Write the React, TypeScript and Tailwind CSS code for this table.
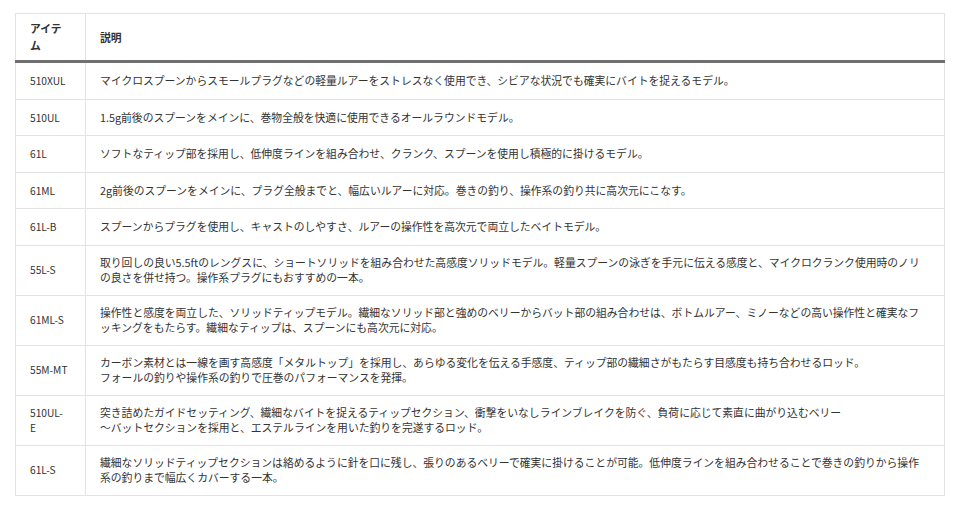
const rows: { item: string[]; lines: string[] }[] = [
  { item: ['510XUL'], lines: ['マイクロスプーンからスモールプラグなどの軽量ルアーをストレスなく使用でき、シビアな状況でも確実にバイトを捉えるモデル。'] },
  { item: ['510UL'], lines: ['1.5g前後のスプーンをメインに、巻物全般を快適に使用できるオールラウンドモデル。'] },
  { item: ['61L'], lines: ['ソフトなティップ部を採用し、低伸度ラインを組み合わせ、クランク、スプーンを使用し積極的に掛けるモデル。'] },
  { item: ['61ML'], lines: ['2g前後のスプーンをメインに、プラグ全般までと、幅広いルアーに対応。巻きの釣り、操作系の釣り共に高次元にこなす。'] },
  { item: ['61L-B'], lines: ['スプーンからプラグを使用し、キャストのしやすさ、ルアーの操作性を高次元で両立したベイトモデル。'] },
  {
    item: ['55L-S'],
    lines: [
      '取り回しの良い5.5ftのレングスに、ショートソリッドを組み合わせた高感度ソリッドモデル。軽量スプーンの泳ぎを手元に伝える感度と、マイクロクランク使用時のノリ',
      'の良さを併せ持つ。操作系プラグにもおすすめの一本。',
    ],
  },
  {
    item: ['61ML-S'],
    lines: [
      '操作性と感度を両立した、ソリッドティップモデル。繊細なソリッド部と強めのベリーからバット部の組み合わせは、ボトムルアー、ミノーなどの高い操作性と確実なフ',
      'ッキングをもたらす。繊細なティップは、スプーンにも高次元に対応。',
    ],
  },
  {
    item: ['55M-MT'],
    lines: [
      'カーボン素材とは一線を画す高感度「メタルトップ」を採用し、あらゆる変化を伝える手感度、ティップ部の繊細さがもたらす目感度も持ち合わせるロッド。',
      'フォールの釣りや操作系の釣りで圧巻のパフォーマンスを発揮。',
    ],
  },
  {
    item: ['510UL-', 'E'],
    lines: [
      '突き詰めたガイドセッティング、繊細なバイトを捉えるティップセクション、衝撃をいなしラインブレイクを防ぐ、負荷に応じて素直に曲がり込むベリー',
      '～バットセクションを採用と、エステルラインを用いた釣りを完遂するロッド。',
    ],
  },
  {
    item: ['61L-S'],
    lines: [
      '繊細なソリッドティップセクションは絡めるように針を口に残し、張りのあるベリーで確実に掛けることが可能。低伸度ラインを組み合わせることで巻きの釣りから操作',
      '系の釣りまで幅広くカバーする一本。',
    ],
  },
]

export default function App() {
  return (
    <div
      className="bg-white w-[969px] h-[506px] pt-[13px] pl-[15px] text-[#333] text-[10.8px]"
      style={{ fontFamily: '"Noto Sans CJK JP", "Noto Sans", sans-serif' }}
    >
      <table className="w-[930px] border-collapse border border-[#e3e3e3] table-fixed">
        <colgroup>
          <col className="w-[70px]" />
          <col />
        </colgroup>
        <thead>
          <tr className="border-b-[3px] border-[#707070]">
            <th className="text-left font-bold align-middle pl-[14px] pr-2 py-[6px] leading-[17px] border-r border-[#e3e3e3]">
              アイテ<br />ム
            </th>
            <th className="text-left font-bold align-middle px-[14px] py-[6px] leading-[17px]">説明</th>
          </tr>
        </thead>
        <tbody>
          {rows.map(r => {
            const two = r.lines.length > 1
            return (
              <tr key={r.item.join('')} className="border-b border-[#e3e3e3]">
                <td
                  className={
                    'align-middle pl-[14px] pr-2 border-r border-[#e3e3e3] text-[10.2px] ' +
                    (two ? 'py-[9px] leading-[15.5px]' : 'py-[10px] leading-[15.5px]')
                  }
                >
                  {r.item.map((t, i) => (
                    <div key={i}>{t}</div>
                  ))}
                </td>
                <td
                  className={
                    'align-middle px-[14px] whitespace-nowrap ' +
                    (two ? 'py-[9px] leading-[15.5px]' : 'py-[10px] leading-[15.5px]')
                  }
                >
                  {r.lines.map((t, i) => (
                    <div key={i}>{t}</div>
                  ))}
                </td>
              </tr>
            )
          })}
        </tbody>
      </table>
    </div>
  )
}
